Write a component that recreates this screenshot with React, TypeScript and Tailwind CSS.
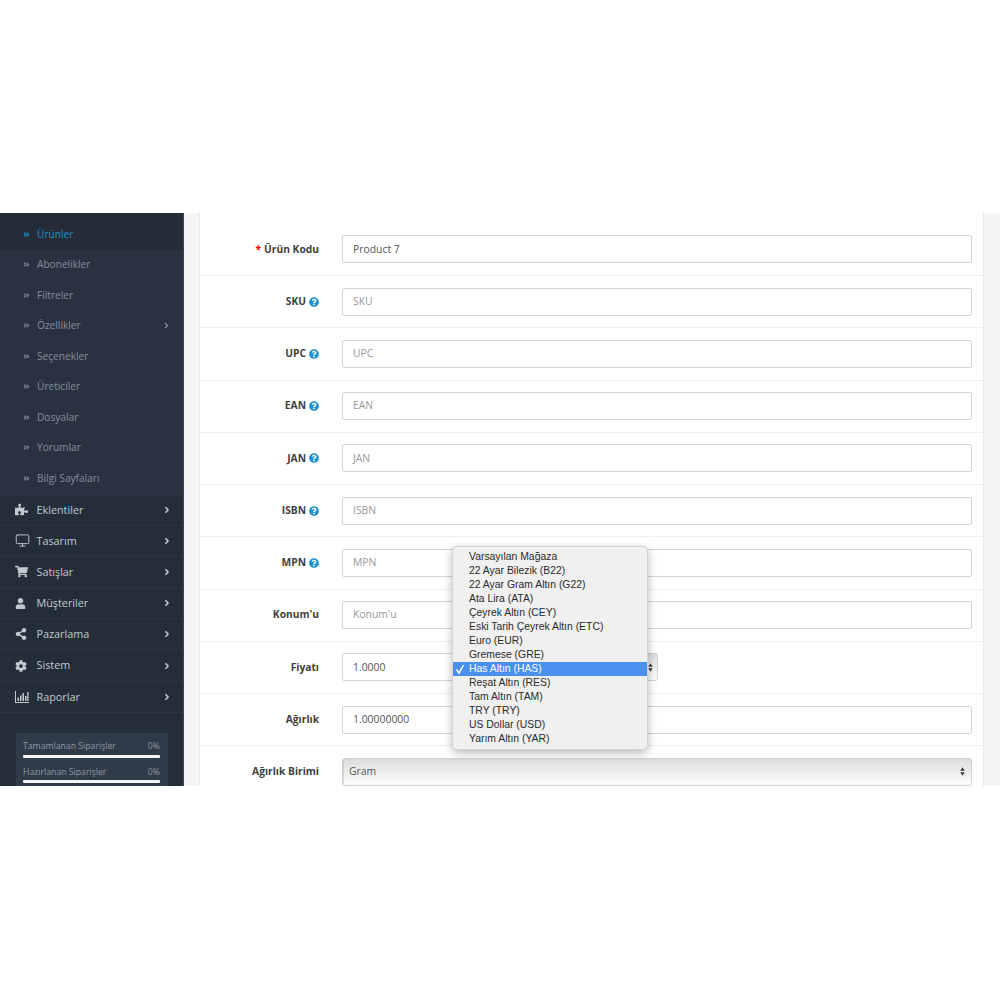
import { Monitor } from "lucide-react";
import {
  FaAngleDoubleRight,
  FaAngleRight,
  FaCog,
  FaPuzzlePiece,
  FaQuestionCircle,
  FaShareAlt,
  FaShoppingCart,
  FaUser,
} from "react-icons/fa";

const subItems = ["Ürünler", "Abonelikler", "Filtreler", "Özellikler", "Seçenekler", "Üreticiler", "Dosyalar", "Yorumlar", "Bilgi Sayfaları"];

const options = [
  "Varsayılan Mağaza",
  "22 Ayar Bilezik (B22)",
  "22 Ayar Gram Altın (G22)",
  "Ata Lira (ATA)",
  "Çeyrek Altın (CEY)",
  "Eski Tarih Çeyrek Altın (ETC)",
  "Euro (EUR)",
  "Gremese (GRE)",
  "Has Altın (HAS)",
  "Reşat Altın (RES)",
  "Tam Altın (TAM)",
  "TRY (TRY)",
  "US Dollar (USD)",
  "Yarım Altın (YAR)",
];

function ChartIcon() {
  return (
    <svg viewBox="0 0 14 12" className="w-[14px] h-[12px]" fill="currentColor">
      <path d="M0 0h1v11h13v1H0z" />
      <path d="M2.5 6.5h1.5V10H2.5zM5 4.5h1.5V10H5zM7.5 2h1.5v8H7.5zM10 5h1.5v5H10zM12.2 1h1.3v9h-1.3z" />
    </svg>
  );
}

const mainItems = [
  { label: "Eklentiler", icon: <FaPuzzlePiece className="w-[13px] h-[13px]" /> },
  { label: "Tasarım", icon: <Monitor className="w-[15px] h-[15px]" strokeWidth={1.5} /> },
  { label: "Satışlar", icon: <FaShoppingCart className="w-[13px] h-[13px]" /> },
  { label: "Müşteriler", icon: <FaUser className="w-[11px] h-[11px]" /> },
  { label: "Pazarlama", icon: <FaShareAlt className="w-[12px] h-[12px]" /> },
  { label: "Sistem", icon: <FaCog className="w-[12px] h-[12px]" /> },
  { label: "Raporlar", icon: <ChartIcon /> },
];

function Sidebar() {
  return (
    <aside className="w-[184px] shrink-0 bg-[#232e39] border-r border-[#3d4651] overflow-hidden">
      <ul className="bg-[#2a3242]">
        <li className="h-[6px] bg-[#252c38]" />
        {subItems.map((item, i) => (
          <li
            key={item}
            className={`h-[30.5px] flex items-center pl-[23px] pr-[12px] text-[10.15px] ${i === 0 ? "bg-[#252c38] text-[#1e91cf]" : "text-[#858e9b]"}`}
          >
            <FaAngleDoubleRight className="w-[7px] h-[7px] mr-[7px]" />
            <span className="flex-1">{item}</span>
            {item === "Özellikler" && <FaAngleRight className="w-[9px] h-[9px]" />}
          </li>
        ))}
      </ul>
      <ul>
        {mainItems.map((item) => (
          <li key={item.label} className="h-[31.2px] flex items-center pl-[15px] pr-[11px] border-t border-[#2a3644] text-[#c3c9cf] text-[10.8px]">
            <span className="w-[21.5px] flex items-center shrink-0">{item.icon}</span>
            <span className="flex-1">{item.label}</span>
            <FaAngleRight className="w-[10px] h-[10px]" />
          </li>
        ))}
      </ul>
      <div className="border-t border-[#2a3644] pt-[20px] pl-[16px] pr-[15px]">
        <div className="bg-[#2f3b49] rounded-[2px] pl-[7px] pr-[8px] pt-[7px] pb-[20px] text-[8.7px] text-[#8f99a5]">
          <div className="flex justify-between h-[13px] items-center">
            <span>Tamamlanan Siparişler</span>
            <span>0%</span>
          </div>
          <div className="h-[3px] bg-[#f5f5f5] rounded-[1px] mt-[2px] mb-[8px]" />
          <div className="flex justify-between h-[13px] items-center">
            <span>Hazırlanan Siparişler</span>
            <span>0%</span>
          </div>
          <div className="h-[3px] bg-[#f5f5f5] rounded-[1px] mt-[1px]" />
        </div>
      </div>
    </aside>
  );
}

function Label({ text, help, required }: { text: string; help?: boolean; required?: boolean }) {
  return (
    <div className="w-[119px] shrink-0 flex justify-end items-center text-[10.25px] font-bold text-[#3f3f3f]">
      {required && <span className="text-[#f00] mr-[3px]">*</span>}
      <span>{text}</span>
      {help && <FaQuestionCircle className="w-[10px] h-[10px] ml-[3px] text-[#1e91cf]" />}
    </div>
  );
}

function Field({ value, placeholder }: { value?: string; placeholder?: string }) {
  return (
    <div className={`flex-1 h-[28px] border border-[#d4d4d4] rounded-[2px] bg-white flex items-center px-[10px] text-[10.4px] ${value ? "text-[#555]" : "text-[#999]"}`}>
      {value ?? placeholder}
    </div>
  );
}

function SelectArrows() {
  return (
    <svg viewBox="0 0 6 10" className="w-[5px] h-[9px] text-[#333]" fill="currentColor">
      <path d="M3 0l2.6 4H.4zM3 10L.4 6h5.2z" />
    </svg>
  );
}

function Row({ children }: { children: React.ReactNode }) {
  return <div className="h-[52.25px] flex items-center pr-[11px] border-b border-[#efefef] gap-[23px]">{children}</div>;
}

const grayField = "bg-gradient-to-b from-[#dedede] to-[#fdfdfd] border border-[#d0d0d0] rounded-[3px] shadow-[inset_1px_0_1px_rgba(0,0,0,0.12)]";

function Form() {
  return (
    <main className="flex-1 bg-[#f5f5f5] overflow-hidden pl-[15px] pr-[16px]">
      <div className="bg-white border-x border-[#e8e8e8] min-h-[573px] pt-[10.75px]">
        <Row>
          <Label text="Ürün Kodu" required />
          <Field value="Product 7" />
        </Row>
        <Row>
          <Label text="SKU" help />
          <Field placeholder="SKU" />
        </Row>
        <Row>
          <Label text="UPC" help />
          <Field placeholder="UPC" />
        </Row>
        <Row>
          <Label text="EAN" help />
          <Field placeholder="EAN" />
        </Row>
        <Row>
          <Label text="JAN" help />
          <Field placeholder="JAN" />
        </Row>
        <Row>
          <Label text="ISBN" help />
          <Field placeholder="ISBN" />
        </Row>
        <Row>
          <Label text="MPN" help />
          <Field placeholder="MPN" />
        </Row>
        <Row>
          <Label text="Konum'u" />
          <Field placeholder="Konum'u" />
        </Row>
        <Row>
          <Label text="Fiyatı" />
          <div className="flex-1 flex">
            <div className="w-[316px] flex h-[28px]">
              <div className="w-[160px] border border-[#d4d4d4] rounded-l-[2px] flex items-center px-[10px] text-[10.4px] text-[#555]">1.0000</div>
              <div className={`flex-1 flex items-center justify-end pr-[4px] ${grayField}`}>
                <SelectArrows />
              </div>
            </div>
          </div>
        </Row>
        <Row>
          <Label text="Ağırlık" />
          <Field value="1.00000000" />
        </Row>
        <Row>
          <Label text="Ağırlık Birimi" />
          <div className={`flex-1 h-[28px] flex items-center justify-between px-[6px] text-[10.4px] text-[#555] ${grayField}`}>
            <span>Gram</span>
            <SelectArrows />
          </div>
        </Row>
      </div>
    </main>
  );
}

function Dropdown() {
  return (
    <div className="absolute left-[452px] top-[333px] w-[196px] h-[204px] bg-[#f0f0f0] rounded-[5px] border border-[#d2d2d2] shadow-[0_3px_10px_rgba(0,0,0,0.28)] py-[3px] font-['Liberation_Sans',sans-serif] text-[10.4px] text-[#2a2a2a]">
      {options.map((o) => {
        const selected = o === "Has Altın (HAS)";
        return (
          <div key={o} className={`h-[14px] flex items-center pl-[16px] pb-[1px] relative ${selected ? "bg-[#4a90f0] text-white" : ""}`}>
            {selected && (
              <svg viewBox="0 0 10 10" className="absolute left-[2px] top-[2px] w-[10px] h-[10px]" fill="none" stroke="currentColor" strokeWidth="1.5">
                <path d="M1.5 5.5L4 9 8.5 1" />
              </svg>
            )}
            {o}
          </div>
        );
      })}
    </div>
  );
}

export default function App() {
  return (
    <div className="w-[1000px] h-[1000px] bg-white pt-[213px] font-['Open_Sans',sans-serif]">
      <div className="relative h-[573px] flex overflow-hidden">
        <Sidebar />
        <Form />
        <Dropdown />
      </div>
    </div>
  );
}
